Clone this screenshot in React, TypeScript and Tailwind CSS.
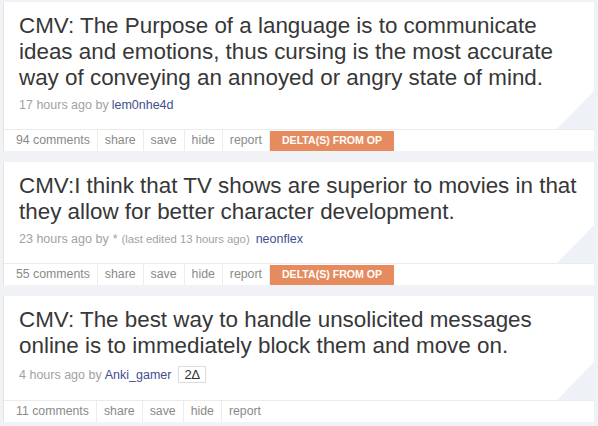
import React from "react"

type Post = {
  title: string
  age: string
  author: string
  edited?: string
  star?: boolean
  deltas?: string
  comments: number
  deltaFromOp?: boolean
}

const posts: Post[] = [
  {
    title:
      "CMV: The Purpose of a language is to communicate ideas and emotions, thus cursing is the most accurate way of conveying an annoyed or angry state of mind.",
    age: "17 hours ago",
    author: "lem0nhe4d",
    comments: 94,
    deltaFromOp: true,
  },
  {
    title:
      "CMV:I think that TV shows are superior to movies in that they allow for better character development.",
    age: "23 hours ago",
    author: "neonflex",
    star: true,
    edited: "(last edited 13 hours ago)",
    comments: 55,
    deltaFromOp: true,
  },
  {
    title:
      "CMV: The best way to handle unsolicited messages online is to immediately block them and move on.",
    age: "4 hours ago",
    author: "Anki_gamer",
    deltas: "2∆",
    comments: 11,
  },
]

function Card({ post }: { post: Post }) {
  return (
    <div className="bg-white border-l border-[#e2e3e6]">
      <div className="relative pl-[15px] pr-[6px] pt-[11px] pb-4">
        <h2 className="text-[22.4px] leading-[26px] text-[#373737]">{post.title}</h2>
        <div className="mt-[6px] flex items-center text-[12.5px] leading-4 text-[#a2a2a2]">
          <span>{post.age} by</span>
          {post.star && <span className="ml-[4px]">*</span>}
          {post.edited && <span className="ml-[4px] text-[11.3px]">{post.edited}</span>}
          <span className={post.edited ? "ml-[6px] text-[#3f4f8f]" : "ml-[3px] text-[#3f4f8f]"}>
            {post.author}
          </span>
          {post.deltas && (
            <span className="my-[1px] ml-[7px] flex h-[17px] items-center border border-[#dcdcdc] px-[5px] text-[13px] text-[#333]">
              {post.deltas}
            </span>
          )}
        </div>
        <div className="absolute right-0 bottom-0 h-[38px] w-[37px] bg-[#eef1f6] [clip-path:polygon(100%_0,100%_100%,0_100%)]" />
      </div>
      <div className="flex h-[22px] items-stretch border-t border-[#ebebeb] pl-[5px] text-[12.3px] text-[#8a8a8a]">
        {[`${post.comments} comments`, "share", "save", "hide", "report"].map((t) => (
          <span key={t} className="flex items-center border-r border-[#ececec] px-[7px] last:border-r-0">
            {t}
          </span>
        ))}
        {post.deltaFromOp && (
          <span className="mt-[1px] flex items-center bg-[#e68b5d] px-[12px] text-[10.6px] font-bold text-white">
            DELTA(S) FROM OP
          </span>
        )}
      </div>
    </div>
  )
}

export default function App() {
  return (
    <div
      className="flex h-[426px] w-[598px] flex-col gap-[11px] overflow-hidden bg-[#f1f2f5] pl-[3px] pr-[4px] pt-[2px]"
      style={{ fontFamily: '"Liberation Sans", Arial, sans-serif' }}
    >
      {posts.map((p, i) => (
        <Card key={i} post={p} />
      ))}
    </div>
  )
}
